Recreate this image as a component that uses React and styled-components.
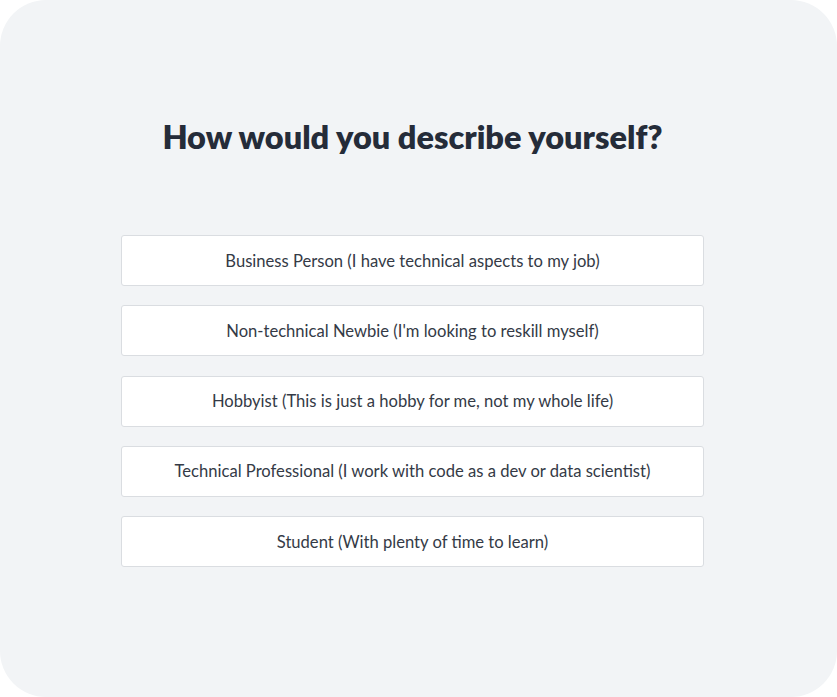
import styled, { createGlobalStyle } from "styled-components";

const GlobalStyle = createGlobalStyle`
  html, body {
    margin: 0;
    padding: 0;
    background: #ffffff;
  }
  body {
    font-family: Lato, "Noto Sans", sans-serif;
  }
`;

const Panel = styled.div`
  width: 837px;
  height: 697px;
  box-sizing: border-box;
  background: #f2f4f6;
  border-radius: 46px;
  display: flex;
  flex-direction: column;
  align-items: center;
  padding-top: 115px;
`;

const Title = styled.h1`
  margin: 0;
  font-family: Lato, sans-serif;
  font-weight: 800;
  font-size: 32.5px;
  line-height: 44px;
  color: #252c39;
  transform: translateX(-6px);
`;

const Options = styled.div`
  margin-top: 76px;
  width: 583px;
  display: flex;
  flex-direction: column;
  gap: 19.25px;
  transform: translateX(-6px);
`;

const Option = styled.button`
  height: 51px;
  box-sizing: border-box;
  background: #ffffff;
  border: 1px solid #dadde1;
  border-radius: 3px;
  font-family: Lato, sans-serif;
  font-size: 16.6px;
  color: #343a46;
  cursor: pointer;
  padding: 0 16px;
`;

const choices = [
  "Business Person (I have technical aspects to my job)",
  "Non-technical Newbie (I'm looking to reskill myself)",
  "Hobbyist (This is just a hobby for me, not my whole life)",
  "Technical Professional (I work with code as a dev or data scientist)",
  "Student (With plenty of time to learn)",
];

export default function App() {
  return (
    <>
      <GlobalStyle />
      <Panel>
        <Title>How would you describe yourself?</Title>
        <Options>
          {choices.map((c) => (
            <Option key={c}>{c}</Option>
          ))}
        </Options>
      </Panel>
    </>
  );
}
